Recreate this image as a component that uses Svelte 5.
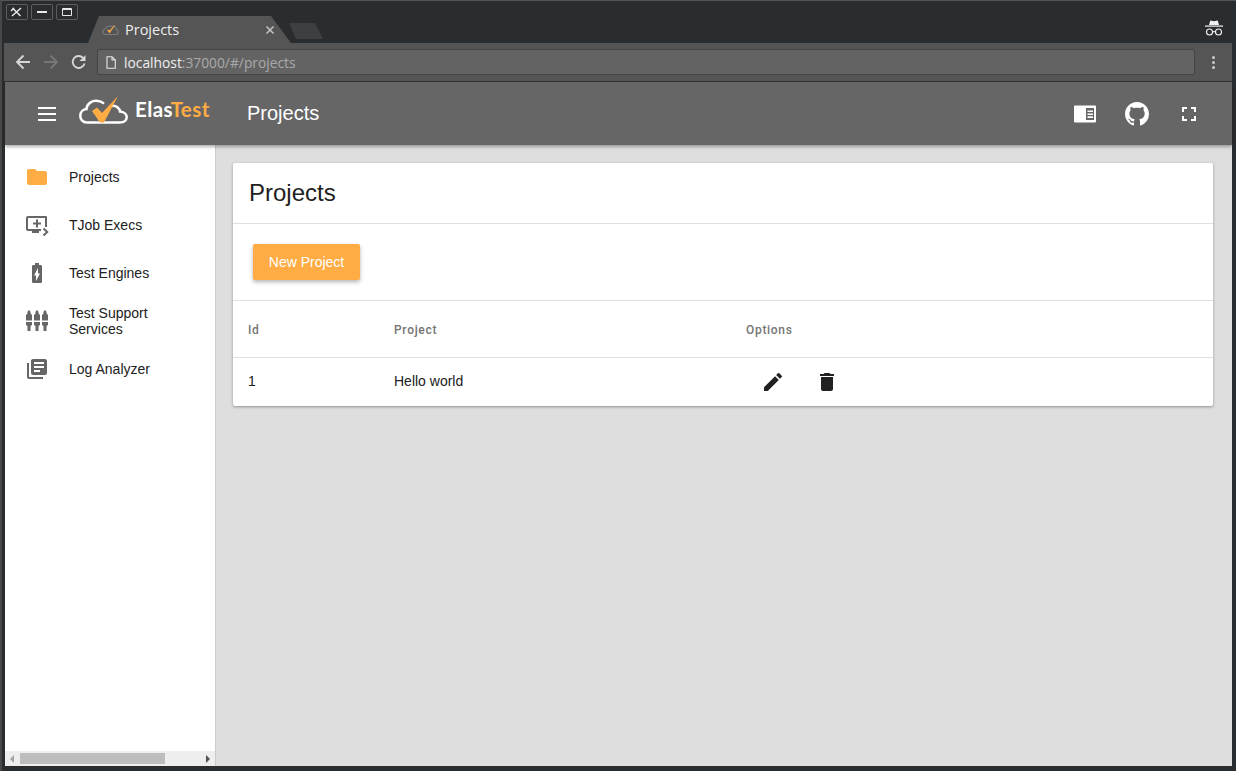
<script>
  const nav = [
    { label: 'Projects', icon: 'folder' },
    { label: 'TJob Execs', icon: 'exec' },
    { label: 'Test Engines', icon: 'battery' },
    { label: 'Test Support Services', icon: 'tss' },
    { label: 'Log Analyzer', icon: 'log' }
  ];
</script>

<div class="window">
  <div class="titlebar">
    <div class="controls">
      <button class="wc" aria-label="close">
        <svg width="14" height="12" viewBox="0 0 14 12"><path d="M2.500 2l8 8M11 2l-9 8M1 5l3-3" stroke="#e8e8e8" stroke-width="1.500" fill="none"/></svg>
      </button>
      <button class="wc" aria-label="minimize"><span class="minbar"></span></button>
      <button class="wc" aria-label="maximize"><span class="maxbox"></span></button>
    </div>
    <div class="tab">
      <svg class="favicon" width="17" height="12" viewBox="0 0 17 12">
        <path d="M3 10.500h10.500a2.500 2.500 0 0 0 .5-5 3.500 3.500 0 0 0-5.500-3 3.500 3.500 0 0 0-5 2.500 2.800 2.800 0 0 0-.5 5.500z" fill="none" stroke="#7a7a7a" stroke-width="1.200"/>
        <path d="M5.500 6l2 3 5-7.500-4.500 5z" fill="#ffac44" stroke="#ffac44" stroke-width=".6"/>
      </svg>
      <span class="tab-title">Projects</span>
      <svg class="tab-x" width="10" height="10" viewBox="0 0 10 10"><path d="M1.500 1.500l7 7M8.500 1.500l-7 7" stroke="#c4c4c4" stroke-width="1.500"/></svg>
    </div>
    <div class="newtab"></div>
    <div class="spacer"></div>
    <svg class="incognito" width="20" height="20" viewBox="0 0 20 20">
      <path d="M5 6l1.300-4.500L10 2.300l3.700-.8L15 6z" fill="#f2f2f2"/>
      <rect x="1" y="6.500" width="18" height="1.200" fill="#f2f2f2"/>
      <circle cx="5.500" cy="13" r="3" fill="none" stroke="#f2f2f2" stroke-width="1.100"/>
      <circle cx="14.500" cy="13" r="3" fill="none" stroke="#f2f2f2" stroke-width="1.100"/>
      <path d="M8.500 12.700h3" stroke="#f2f2f2" stroke-width="1.100"/>
    </svg>
  </div>

  <div class="toolbar">
    <svg class="tb" width="16" height="16" viewBox="0 0 16 16"><path d="M15 8H2.500M8.500 1.500L2 8l6.500 6.500" fill="none" stroke="#d8d8d8" stroke-width="1.800"/></svg>
    <svg class="tb" width="16" height="16" viewBox="0 0 16 16"><path d="M1 8h12.500M7.500 1.500L14 8l-6.500 6.500" fill="none" stroke="#777" stroke-width="1.800"/></svg>
    <svg class="tb" width="16" height="16" viewBox="0 0 16 16"><path d="M13.500 9.500a6 6 0 1 1-1.500-5.700" fill="none" stroke="#d8d8d8" stroke-width="1.800"/><path d="M14.500 1v6h-6z" fill="#d8d8d8"/></svg>
    <div class="omnibox">
      <svg width="10" height="13" viewBox="0 0 10 13"><path d="M1 .7h5l3.300 3.300v8.300H1zM6 .7V4h3.300" fill="none" stroke="#e8e8e8" stroke-width="1.100"/></svg>
      <span class="url"><span class="host">localhost</span>:37000/#/projects</span>
    </div>
    <div class="dots"><i></i><i></i><i></i></div>
  </div>

  <header class="appbar">
    <button class="burger" aria-label="menu"><i></i><i></i><i></i></button>
    <div class="logo">
      <svg width="50" height="30" viewBox="0 0 50 30">
        <path d="M25 26.500H8C3.500 26.500 1.300 23 1.300 19.800 1.300 15.800 4 13.300 7.500 13c.5-6 6.500-9 11.500-8 2 .2 3.800 1 5.200 2M33 10c4-.8 7.700 2.500 8 5.500 4 .3 6.700 2.800 6.700 5.700 0 3-2.700 5.300-6.700 5.300H25" fill="none" stroke="#fff" stroke-width="2.500" stroke-linecap="round"/>
        <path d="M13 15l5-3.500 5 5.500L39 0 25 26.500h-4z" fill="#ffac44"/>
      </svg>
      <span class="wordmark">Elas<span class="orange">Test</span></span>
    </div>
    <span class="apptitle">Projects</span>
    <div class="spacer"></div>
    <div class="actions">
      <svg width="24" height="24" viewBox="0 0 24 24"><path fill-rule="evenodd" d="M2 3.500h20a1 1 0 0 1 1 1v15a1 1 0 0 1-1 1H2a1 1 0 0 1-1-1v-15a1 1 0 0 1 1-1zm11 2.500v12h8V6zm1.500 2.500h5.500v1.600h-5.500zm0 2.900h5.500V13h-5.500zm0 2.900h5.500v1.600h-5.500z" fill="#fff"/></svg>
      <svg width="24" height="24" viewBox="0 0 16 16"><path fill="#fff" d="M8 0C3.580 0 0 3.580 0 8c0 3.540 2.290 6.530 5.470 7.590.4.070.55-.17.550-.38 0-.19-.01-.82-.01-1.490-2.010.37-2.530-.49-2.690-.94-.09-.23-.48-.94-.82-1.130-.28-.15-.68-.52-.01-.53.630-.01 1.080.58 1.230.82.720 1.210 1.870.87 2.330.66.070-.52.280-.87.510-1.070-1.780-.2-3.640-.89-3.640-3.950 0-.87.310-1.590.820-2.150-.08-.2-.36-1.020.08-2.120 0 0 .67-.21 2.200.82.640-.18 1.320-.27 2-.27s1.360.09 2 .27c1.530-1.040 2.200-.82 2.200-.82.440 1.100.16 1.920.08 2.120.51.560.82 1.270.82 2.150 0 3.070-1.870 3.750-3.650 3.950.29.250.54.730.54 1.480 0 1.070-.01 1.930-.01 2.200 0 .21.150.46.550.38A8.010 8.010 0 0 0 16 8c0-4.420-3.580-8-8-8z"/></svg>
      <svg width="24" height="24" viewBox="0 0 24 24"><path d="M7 14H5v5h5v-2H7v-3zm-2-4h2V7h3V5H5v5zm12 7h-3v2h5v-5h-2v3zM14 5v2h3v3h2V5h-5z" fill="#fff"/></svg>
    </div>
  </header>

  <div class="body">
    <aside class="sidebar">
      <nav class="navlist">
        {#each nav as item}
          <div class="navitem">
            <span class="navicon">
              {#if item.icon === 'folder'}
                <svg width="24" height="24" viewBox="0 0 24 24"><path d="M10 4H4c-1.100 0-2 .9-2 2v12c0 1.100.9 2 2 2h16c1.100 0 2-.9 2-2V8c0-1.100-.9-2-2-2h-8l-2-2z" fill="#ffac44"/></svg>
              {:else if item.icon === 'exec'}
                <svg width="24" height="24" viewBox="0 0 24 24"><path d="M3 3h18a1 1 0 0 1 1 1v10h-2V5H3v11h13v2H3a2 2 0 0 1-2-2V5a2 2 0 0 1 2-2z" fill="#666"/><path d="M7 18h7v2H7zM11 6.500h2v3h3v2h-3v3h-2v-3H8v-2h3z" fill="#666"/><path d="M18.500 15.500l3.700 3.500-3.700 3.500" fill="none" stroke="#666" stroke-width="2"/></svg>
              {:else if item.icon === 'battery'}
                <svg width="24" height="24" viewBox="0 0 24 24"><path fill-rule="evenodd" d="M15.670 4H14V2h-4v2H8.330C7.600 4 7 4.600 7 5.330v15.330C7 21.400 7.600 22 8.330 22h7.330c.74 0 1.340-.6 1.340-1.330V5.330C17 4.600 16.400 4 15.670 4zM11 20v-5.500H9L13 7v5.500h2L11 20z" fill="#666"/></svg>
              {:else if item.icon === 'tss'}
                <svg width="24" height="24" viewBox="0 0 24 24">
                  {#each [4, 12, 20] as x}
                    <path d="M{x - 1} 1.500h2l1 4H{x + 3}v6h-6v-6h1zM{x - 3} 13h6v3l-1.500 1v5h-3v-5L{x - 3} 16z" fill="#666"/>
                  {/each}
                </svg>
              {:else}
                <svg width="24" height="24" viewBox="0 0 24 24"><path d="M4 6H2v14c0 1.100.9 2 2 2h14v-2H4V6zm16-4H8c-1.100 0-2 .9-2 2v12c0 1.100.9 2 2 2h12c1.100 0 2-.9 2-2V4c0-1.100-.9-2-2-2zm-1 9H9V9h10v2zm-4 4H9v-2h6v2zm4-8H9V5h10v2z" fill="#666"/></svg>
              {/if}
            </span>
            <span class="navlabel">{item.label}</span>
          </div>
        {/each}
      </nav>
      <div class="hscroll">
        <span class="arrow left"></span>
        <span class="thumb"></span>
        <span class="arrow right"></span>
      </div>
    </aside>

    <main class="content">
      <section class="card">
        <h1 class="cardtitle">Projects</h1>
        <div class="btnrow"><button class="newbtn">New Project</button></div>
        <div class="row head">
          <span class="c1">Id</span><span class="c2">Project</span><span class="c3">Options</span>
        </div>
        <div class="row data">
          <span class="c1">1</span><span class="c2">Hello world</span>
          <span class="c3 opts">
            <svg width="24" height="24" viewBox="0 0 24 24"><path d="M3 17.250V21h3.750L17.810 9.940l-3.750-3.750L3 17.250zM20.710 7.040a1 1 0 0 0 0-1.410l-2.340-2.340a1 1 0 0 0-1.410 0l-1.830 1.830 3.750 3.750 1.830-1.830z" fill="#212121"/></svg>
            <svg width="24" height="24" viewBox="0 0 24 24"><path d="M6 19c0 1.100.9 2 2 2h8c1.100 0 2-.9 2-2V7H6v12zM19 4h-3.500l-1-1h-5l-1 1H5v2h14V4z" fill="#212121"/></svg>
          </span>
        </div>
      </section>
    </main>
  </div>
</div>

<style>
  :global(body) { margin: 0; background: #2a2d2f; overflow: hidden; }
  .window {
    width: 1236px; height: 771px; box-sizing: border-box;
    display: flex; flex-direction: column;
    background: #2a2d2f;
    border-top: 1px solid #555;
    border-left: 2px solid #484848;
    padding: 0 4px 5px 2px;
    font-family: Roboto, sans-serif;
    overflow: hidden;
  }
  .spacer { flex: 1; }
  .titlebar { height: 42px; flex: none; display: flex; align-items: flex-start; margin: 0 -4px 0 -2px; padding: 0 4px; }
  .controls { display: flex; gap: 3px; margin: 3px 0 0 0; }
  .wc {
    width: 20px; height: 14px; box-sizing: content-box; padding: 0;
    border: 1px solid #5c5f60; border-radius: 2px; background: #2a2d2f;
    display: flex; align-items: center; justify-content: center;
  }
  .minbar { width: 10px; height: 2px; background: #e8e8e8; }
  .maxbox { width: 8px; height: 5px; border: 1px solid #e8e8e8; border-top-width: 2px; border-radius: 1px; }
  .tab {
    margin: 15px 0 0 10px; width: 203px; height: 27px; flex: none;
    background: #555;
    clip-path: polygon(0 100%, 11px 0, 183px 0, 100% 100%);
    display: flex; align-items: center; box-sizing: border-box; padding: 0 16px 0 14px;
    font-family: "Open Sans", sans-serif;
  }
  .favicon { margin-right: 6px; }
  .tab-title { color: #eee; font-size: 14.500px; flex: 1; }
  .newtab {
    width: 34px; height: 16px; margin: 22px 0 0 -2px; background: #3d3f41;
    clip-path: polygon(0 0, 26px 0, 100% 100%, 7px 100%);
  }
  .incognito { margin: 18px 8px 0 0; }

  .toolbar {
    height: 38px; flex: none; background: #555; display: flex; align-items: center;
    border-bottom: 1px solid #333; box-sizing: content-box; padding-left: 11px;
  }
  .tb { margin-right: 12px; flex: none; }
  .omnibox {
    width: 1098px; height: 26px; margin-left: -2px; box-sizing: border-box; flex: none;
    background: #636363; border: 1px solid #444; border-radius: 3px;
    display: flex; align-items: center; gap: 8px; padding-left: 8px;
    font-family: "Open Sans", sans-serif; font-size: 13.800px; color: #aaa;
  }
  .host { color: #f0f0f0; }
  .dots { display: flex; flex-direction: column; gap: 2px; margin-left: 17px; }
  .dots i { width: 3px; height: 3px; border-radius: 50%; background: #ccc; display: block; }

  .appbar {
    height: 63px; flex: none; background: #666; display: flex; align-items: center;
    box-shadow: 0 2px 3px rgba(0,0,0,.3); position: relative; z-index: 2;
    color: #fff; margin-left: 1px;
  }
  .burger {
    background: none; border: 0; padding: 0; width: 18px; margin-left: 33px;
    display: flex; flex-direction: column; gap: 4px;
  }
  .burger i { display: block; height: 2px; background: #fff; }
  .logo { display: flex; align-items: center; margin-left: 23px; gap: 6px; width: 136px; margin-top: -6px; flex: none; }
  .wordmark { font-family: Lato, sans-serif; font-weight: 700; font-size: 20.500px; letter-spacing: .4px; margin-top: -4px; }
  .orange { color: #ffac44; }
  .apptitle { font-size: 20px; margin-left: 32px; font-family: "Liberation Sans", sans-serif; }
  .actions { display: flex; gap: 28px; margin-right: 31px; align-items: center; }

  .body { flex: 1; display: flex; min-height: 0; margin-left: 1px; }
  .sidebar {
    width: 211px; flex: none; background: #fff; border-right: 1px solid #ccc; box-sizing: border-box;
    display: flex; flex-direction: column;
  }
  .navlist { flex: 1; padding-top: 8px; }
  .navitem { height: 48px; display: flex; align-items: center; padding-left: 20px; }
  .navicon { width: 24px; height: 24px; margin-right: 20px; flex: none; }
  .navicon svg { display: block; }
  .navlabel { font-family: "Liberation Sans", sans-serif; font-size: 14px; line-height: 16px; color: #212121; width: 110px; }
  .hscroll { height: 15px; background: #eee; display: flex; align-items: center; padding: 0 5px; box-sizing: border-box; }
  .thumb { width: 145px; height: 11px; background: #bdbdbd; margin-left: 6px; }
  .arrow { width: 0; height: 0; border-top: 4px solid transparent; border-bottom: 4px solid transparent; }
  .arrow.left { border-right: 4px solid #a3a3a3; }
  .arrow.right { border-left: 4px solid #505050; margin-left: auto; }

  .content { flex: 1; background: #dedede; padding: 18px 19px 0 17px; }
  .card { background: #fff; border-radius: 2px; box-shadow: 0 1px 3px rgba(0,0,0,.35); }
  .cardtitle {
    margin: 0; height: 60px; box-sizing: content-box; font-weight: 400; font-size: 24px; color: #212121;
    font-family: "Liberation Sans", sans-serif;
    line-height: 60px; padding-left: 16px; border-bottom: 1px solid #e0e0e0;
  }
  .btnrow { height: 76px; border-bottom: 1px solid #e0e0e0; display: flex; align-items: center; padding-left: 20px; }
  .newbtn {
    width: 107px; height: 36px; background: #ffac44; color: #fff; border: 0; border-radius: 2px;
    font: 400 14px "Liberation Sans", sans-serif; box-shadow: 0 2px 4px rgba(0,0,0,.3); padding: 0;
  }
  .row { display: grid; grid-template-columns: 146px 352px 1fr; padding-left: 15px; align-items: center; }
  .head { height: 57px; border-bottom: 1px solid #e0e0e0; font-size: 12px; font-weight: 500; color: #757575; letter-spacing: .7px; padding-top: 1px; box-sizing: border-box; }
  .data { height: 48px; font-size: 14px; color: #212121; font-family: "Liberation Sans", sans-serif; }
  .data .c1, .data .c2 { margin-top: -2px; }
  .opts { display: flex; gap: 30px; padding-left: 15px; }
  .opts svg { display: block; }
</style>
